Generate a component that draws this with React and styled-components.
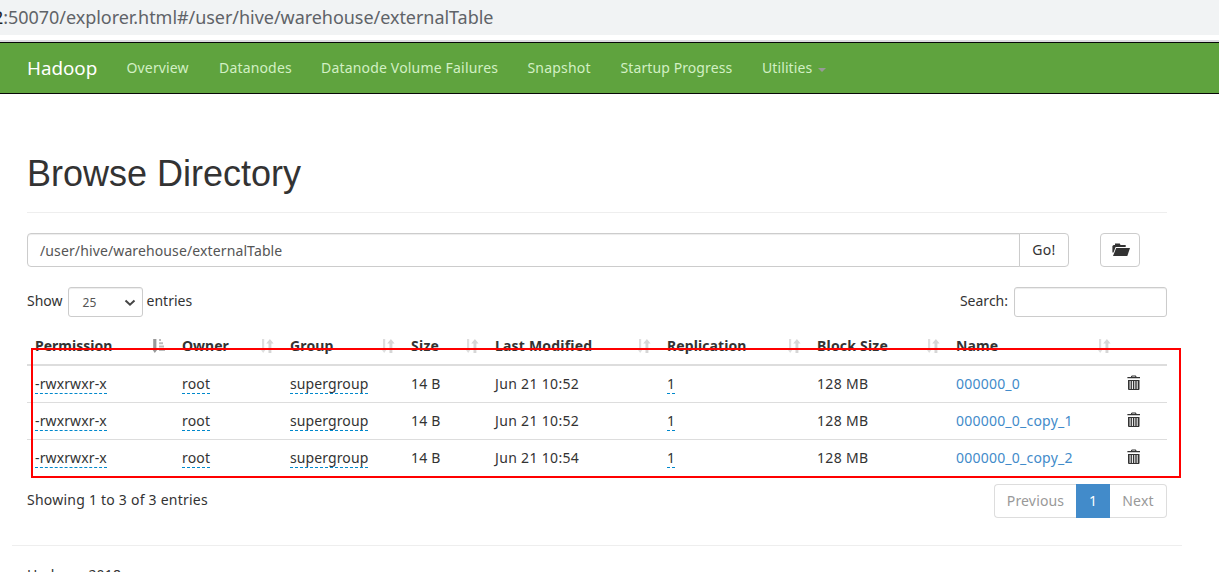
import React from "react";
import styled, { createGlobalStyle } from "styled-components";

const Global = createGlobalStyle`
  * { box-sizing: border-box; }
  html, body { margin: 0; padding: 0; background: #fff; overflow: hidden; }
  body {
    font-family: "Noto Sans", "Open Sans", sans-serif;
    font-size: 14px;
    line-height: 20px;
    color: #333;
  }
`;

const Page = styled.div`
  height: 572px;
  overflow: hidden;
`;

const AddressBar = styled.div`
  height: 42px;
  background: #f1f3f4;
  box-shadow: inset 0 -2px #dcdce0, inset 0 -7px #fff;
  padding: 5px 0 0;
  margin-left: -7px;
  font-size: 18px;
  line-height: 25px;
  letter-spacing: -0.045px;
  color: #5f6368;
  white-space: nowrap;
`;

const Host = styled.span`
  color: #202124;
`;

const Navbar = styled.nav`
  height: 52px;
  display: flex;
  align-items: center;
  background: #5fa33e;
  border-top: 1px solid #080808;
  border-bottom: 1px solid #080808;
  padding-left: 27px;
`;

const Brand = styled.a`
  width: 99.5px;
  font-size: 18.8px;
  color: #fff;
  white-space: nowrap;
`;

const NavLink = styled.a`
  width: ${(p) => p.$width}px;
  color: #d2f0c4;
  white-space: nowrap;
  display: flex;
  align-items: center;
  letter-spacing: ${(p) => p.$track || 0}px;
`;

const Caret = styled.span`
  margin: 3px 0 0 6px;
  border: 4px solid transparent;
  border-top-color: #999;
  border-bottom: 0;
`;

const Main = styled.main`
  width: 1140px;
  margin: 0 0 0 27px;
`;

const Title = styled.h1`
  margin: 0;
  padding: 60px 0 18px;
  height: 119px;
  border-bottom: 1px solid #eee;
  font: 400 36px/40px "Liberation Sans", Arial, sans-serif;
`;

const PathRow = styled.div`
  display: flex;
  margin-top: 20px;
  height: 34px;
`;

const PathInput = styled.div`
  width: 993px;
  border: 1px solid #ccc;
  border-radius: 4px 0 0 4px;
  box-shadow: inset 0 1px 1px rgba(0, 0, 0, 0.075);
  padding: 7px 12px;
  color: #555;
  line-height: 20px;
  letter-spacing: 0.12px;
`;

const GoButton = styled.button`
  width: 50px;
  margin-left: -1px;
  padding: 0;
  background: #fff;
  border: 1px solid #ccc;
  border-radius: 0 4px 4px 0;
  font: inherit;
  letter-spacing: 0.3px;
  color: #333;
`;

const FolderButton = styled.button`
  width: 40px;
  margin-left: 31px;
  padding: 0 0 0 2px;
  display: flex;
  align-items: center;
  justify-content: center;
  background: #fff;
  border: 1px solid #ccc;
  border-radius: 4px;
`;

const Controls = styled.div`
  display: flex;
  justify-content: space-between;
  margin-top: 20px;
  height: 30px;
`;

const Label = styled.label`
  display: flex;
  line-height: 28px;
`;

const Select = styled.div`
  width: 75px;
  height: 30px;
  margin: 0 4px 0 5px;
  padding: 1px 6px 0 14px;
  display: flex;
  align-items: center;
  justify-content: space-between;
  border: 1px solid #ccc;
  border-radius: 3px;
  box-shadow: inset 0 1px 1px rgba(0, 0, 0, 0.075);
  font-size: 12px;
  color: #555;
`;

const SearchInput = styled.input`
  width: 153px;
  height: 30px;
  margin-left: 6px;
  border: 1px solid #ccc;
  border-radius: 3px;
  box-shadow: inset 0 1px 1px rgba(0, 0, 0, 0.075);
`;

const TableWrap = styled.div`
  position: relative;
  margin-top: 10px;
`;

const Table = styled.table`
  width: 1140px;
  table-layout: fixed;
  border-collapse: separate;
  border-spacing: 0;
`;

const Th = styled.th`
  width: ${(p) => p.$width}px;
  height: 39px;
  padding: 0 8px;
  border-bottom: 2px solid #ddd;
  text-align: left;
  font-weight: 700;
  white-space: nowrap;
`;

const HeadCell = styled.div`
  display: flex;
  justify-content: space-between;
  align-items: center;
  letter-spacing: ${(p) => p.$track || 0}px;
`;

const Td = styled.td`
  height: ${(p) => (p.$first ? 36 : 37)}px;
  padding: 0 8px;
  border-top: ${(p) => (p.$first ? 0 : 1)}px solid #ddd;
  white-space: nowrap;
`;

const Text = styled.span`
  letter-spacing: ${(p) => p.$track || 0}px;
`;

const Editable = styled(Text)`
  display: inline-block;
  height: 20px;
  line-height: 20px;
  border-bottom: 1px dashed #0088cc;
`;

const FileLink = styled(Text).attrs({ as: "a" })`
  color: #428bca;
`;

const Highlight = styled.div`
  position: absolute;
  left: 4px;
  top: 21px;
  width: 1150px;
  height: 130px;
  border: 2px solid #f00;
  pointer-events: none;
`;

const Bottom = styled.div`
  display: flex;
  justify-content: space-between;
  margin-top: 8px;
  height: 34px;
`;

const Info = styled.div`
  padding-top: 6px;
  letter-spacing: 0.23px;
`;

const Pager = styled.div`
  display: flex;
`;

const PageItem = styled.a`
  width: ${(p) => p.$width}px;
  line-height: 32px;
  text-align: center;
  border: 1px solid ${(p) => (p.$active ? "#428bca" : "#ddd")};
  border-left-width: ${(p) => (p.$last ? 0 : 1)}px;
  border-right-width: ${(p) => (p.$firstItem ? 0 : 1)}px;
  border-radius: ${(p) => (p.$firstItem ? "4px 0 0 4px" : p.$last ? "0 4px 4px 0" : 0)};
  background: ${(p) => (p.$active ? "#428bca" : "#fff")};
  color: ${(p) => (p.$active ? "#fff" : "#999")};
  letter-spacing: 0.15px;
`;

const Footer = styled.footer`
  width: 1170px;
  margin: 27px 0 0 12px;
  border-top: 1px solid #eee;
  padding: 19px 15px 0;
  letter-spacing: 0.2px;
`;

const TrashSvg = styled.svg`
  display: block;
  margin-top: -2px;
`;

const SortIcon = () => (
  <svg width="14" height="16" viewBox="0 0 14 16" fill="#d6d6d6">
    <path d="M2 1h2.2v10.5H5.6L3.2 15 0.7 11.5H2z" fill="#dedede" />
    <path d="M8.5 15V5.5H6.2L9.9 1 13.6 5.5H11.4V15z" />
  </svg>
);

const SortedIcon = () => (
  <svg width="14" height="16" viewBox="0 0 14 16" fill="#999">
    <path d="M1.2 1h3.2v10h1.4L2.8 15 0 11h1.2z" />
    <path d="M7 1h2v2H7zM7 4.3h4v2H7zM7 7.6h5v2H7zM7 11h6v2H7z" fill="#bbb" />
  </svg>
);

const FolderIcon = () => (
  <svg width="18" height="14" viewBox="0 0 18 14" fill="#333">
    <path d="M0.4 9.5V3L1.7 2H3V0.6h4.8L8.5 2h5.2v2H3.6L1.5 9.5z" />
    <path d="M4.2 5H18L15.3 13H1z" />
  </svg>
);

const TrashIcon = () => (
  <TrashSvg width="14" height="16" viewBox="0 0 14 16" fill="#333">
    <path d="M4 1.2L5 0.4h3.6L9.4 1.2V2H13v1.2H0.4V2H4zM5.2 1.4V2h3v-.6z" fillRule="evenodd" />
    <path d="M1 5h11.5v9.2L12 15H1.7L1 14.2zM2.6 6v8h1V6zM4.9 6v8h1V6zM7.3 6v8h1V6zM9.7 6v8h1V6z" fillRule="evenodd" />
  </TrashSvg>
);

const Chevron = () => (
  <svg width="12" height="8" viewBox="0 0 12 8" fill="none" stroke="#444" strokeWidth="2">
    <path d="M1.5 1.5L6 5.7l4.5-4.2" />
  </svg>
);

const nav = [
  ["Overview", 92.5, 0.15],
  ["Datanodes", 102, 0.17],
  ["Datanode Volume Failures", 206.5, 0.18],
  ["Snapshot", 93, 0.18],
  ["Startup Progress", 141.5, 0.1],
];

const columns = [
  ["Permission", 147, 0],
  ["Owner", 108, 0],
  ["Group", 121, 0.15],
  ["Size", 84, 0.25],
  ["Last Modified", 172, 0.2],
  ["Replication", 150, 0.1],
  ["Block Size", 139, 0.2],
  ["Name", 171, 0.15],
];

const files = [
  ["Jun 21 10:52", "000000_0"],
  ["Jun 21 10:52", "000000_0_copy_1"],
  ["Jun 21 10:54", "000000_0_copy_2"],
];

export default function App() {
  return (
    <Page>
      <Global />
      <AddressBar>
        <Host>2</Host>:50070/explorer.html#/user/hive/warehouse/externalTable
      </AddressBar>
      <Navbar>
        <Brand>Hadoop</Brand>
        {nav.map(([name, width, track]) => (
          <NavLink key={name} $width={width} $track={track}>{name}</NavLink>
        ))}
        <NavLink $width={80} $track={0.1}>Utilities<Caret /></NavLink>
      </Navbar>
      <Main>
        <Title>Browse Directory</Title>
        <PathRow>
          <PathInput>/user/hive/warehouse/externalTable</PathInput>
          <GoButton>Go!</GoButton>
          <FolderButton><FolderIcon /></FolderButton>
        </PathRow>
        <Controls>
          <Label>Show<Select>25<Chevron /></Select>entries</Label>
          <Label>Search:<SearchInput /></Label>
        </Controls>
        <TableWrap>
          <Table>
            <thead>
              <tr>
                {columns.map(([name, width, track], i) => (
                  <Th key={name} $width={width}>
                    <HeadCell $track={track}>{name}{i === 0 ? <SortedIcon /> : <SortIcon />}</HeadCell>
                  </Th>
                ))}
                <Th $width={48} />
              </tr>
            </thead>
            <tbody>
              {files.map(([date, name], i) => (
                <tr key={name}>
                  <Td $first={i === 0}><Editable $track={0.12}>-rwxrwxr-x</Editable></Td>
                  <Td $first={i === 0}><Editable $track={0.2}>root</Editable></Td>
                  <Td $first={i === 0}><Editable $track={0.1}>supergroup</Editable></Td>
                  <Td $first={i === 0}><Text $track={0.2}>14 B</Text></Td>
                  <Td $first={i === 0}><Text $track={0.33}>{date}</Text></Td>
                  <Td $first={i === 0}><Editable>1</Editable></Td>
                  <Td $first={i === 0}><Text $track={0.35}>128 MB</Text></Td>
                  <Td $first={i === 0}><FileLink $track={0.22}>{name}</FileLink></Td>
                  <Td $first={i === 0}><TrashIcon /></Td>
                </tr>
              ))}
            </tbody>
          </Table>
          <Highlight />
        </TableWrap>
        <Bottom>
          <Info>Showing 1 to 3 of 3 entries</Info>
          <Pager>
            <PageItem $width={82} $firstItem>Previous</PageItem>
            <PageItem $width={34} $active>1</PageItem>
            <PageItem $width={57} $last>Next</PageItem>
          </Pager>
        </Bottom>
      </Main>
      <Footer>Hadoop, 2018.</Footer>
    </Page>
  );
}
